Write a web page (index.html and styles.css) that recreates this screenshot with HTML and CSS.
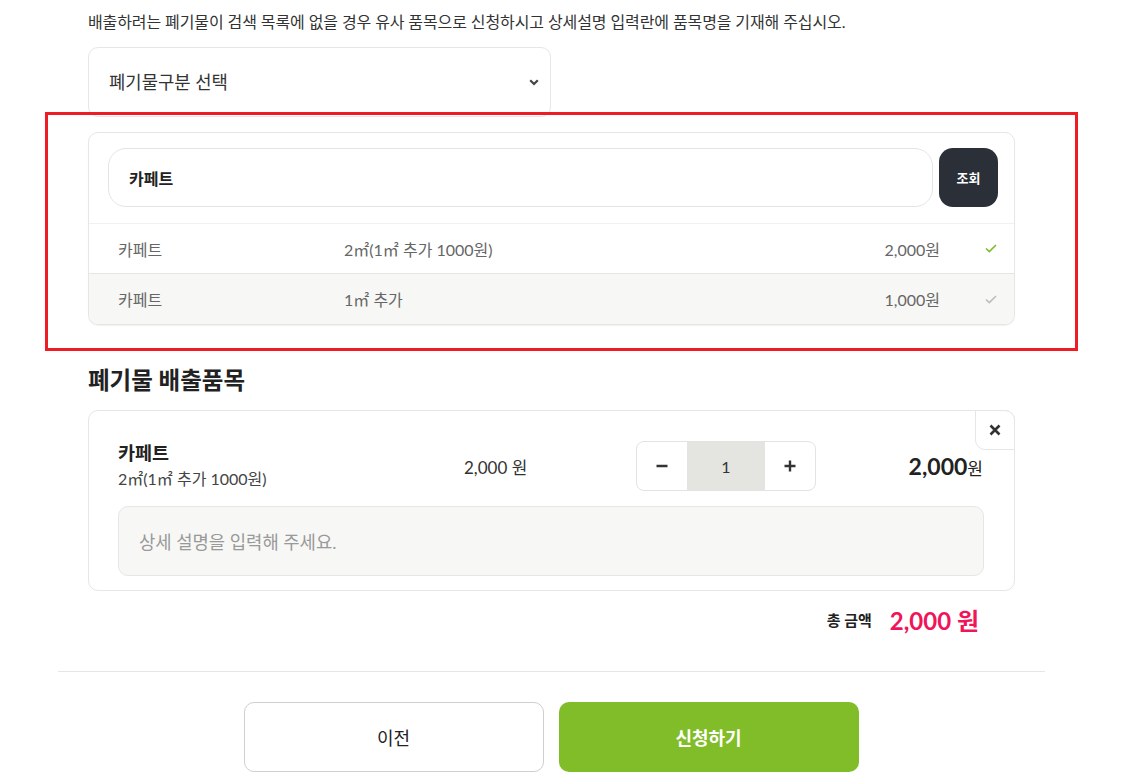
FILE: index.html
```html
<!DOCTYPE html>
<html lang="ko">
<head>
<meta charset="utf-8">
<link rel="stylesheet" href="styles.css">
</head>
<body>
<div class="wrap">
  <div class="inner">
    <p class="notice">배출하려는 폐기물이 검색 목록에 없을 경우 유사 품목으로 신청하시고 상세설명 입력란에 품목명을 기재해 주십시오.</p>
    <div class="select">
      <span>폐기물구분 선택</span>
      <svg class="chev" width="10" height="7" viewBox="0 0 10 7"><path d="M1.2 1.2 L5 5 L8.8 1.2" fill="none" stroke="#444" stroke-width="2.2"/></svg>
    </div>
    <div class="search-card">
      <div class="search-bar">
        <div class="search-input">카페트</div>
        <button class="search-btn">조회</button>
      </div>
      <div class="result-row">
        <span class="r-name">카페트</span>
        <span class="r-spec">2㎡(1㎡ 추가 1000원)</span>
        <span class="r-price">2,000원</span>
        <span class="r-check"><svg width="12" height="9" viewBox="0 0 12 9"><path d="M1 4.5 L4.3 7.6 L11 1" fill="none" stroke="#7dbd2a" stroke-width="1.6"/></svg></span>
      </div>
      <div class="result-row alt">
        <span class="r-name">카페트</span>
        <span class="r-spec">1㎡ 추가</span>
        <span class="r-price">1,000원</span>
        <span class="r-check"><svg width="12" height="9" viewBox="0 0 12 9"><path d="M1 4.5 L4.3 7.6 L11 1" fill="none" stroke="#bdbdbd" stroke-width="1.6"/></svg></span>
      </div>
    </div>
    <h2 class="section-title">폐기물 배출품목</h2>
    <div class="item-card">
      <button class="close-btn"><svg width="12" height="12" viewBox="0 0 12 12"><path d="M1.5 1.5 L10.5 10.5 M10.5 1.5 L1.5 10.5" stroke="#333" stroke-width="2.6"/></svg></button>
      <div class="item-row">
        <div class="item-info">
          <div class="item-name">카페트</div>
          <div class="item-spec">2㎡(1㎡ 추가 1000원)</div>
        </div>
        <div class="item-unit">2,000 원</div>
        <div class="stepper">
          <span class="st-btn"><svg width="12" height="12" viewBox="0 0 12 12"><path d="M0.5 6 H11.5" stroke="#333" stroke-width="2.4"/></svg></span>
          <span class="st-val">1</span>
          <span class="st-btn"><svg width="12" height="12" viewBox="0 0 12 12"><path d="M0.5 6 H11.5 M6 0.5 V11.5" stroke="#333" stroke-width="2.4"/></svg></span>
        </div>
        <div class="item-total"><b>2,000</b>원</div>
      </div>
      <div class="item-desc">상세 설명을 입력해 주세요.</div>
    </div>
    <div class="total">
      <span class="total-label">총 금액</span>
      <span class="total-value">2,000 원</span>
    </div>
  </div>
  <div class="divider"></div>
  <div class="actions">
    <button class="btn btn-prev">이전</button>
    <button class="btn btn-submit">신청하기</button>
  </div>
</div>
<div class="annotation"></div>
</body>
</html>
```

FILE: styles.css
```css
* { box-sizing: border-box; }
body {
  margin: 0;
  background: #fff;
  font-family: "Lato", "Noto Sans CJK KR", sans-serif;
  color: #222;
}
.wrap {
  margin-left: 58px;
  width: 987px;
}
.inner {
  padding: 0 30px;
}
.notice {
  margin: 0;
  padding-top: 12px;
  font-size: 16px;
  line-height: 20px;
  color: #333;
  letter-spacing: -0.1px;
}
.select {
  margin-top: 15px;
  width: 463px;
  height: 70px;
  border: 1px solid #e6e6e6;
  border-radius: 10px;
  display: flex;
  align-items: center;
  justify-content: space-between;
  padding: 0 11px 0 20px;
  font-size: 17.75px;
  color: #333;
}
.select span { margin-top: -2px; }
.search-card {
  margin-top: 15px;
  border: 1px solid #e6e6e6;
  border-radius: 10px;
  overflow: hidden;
  box-shadow: 0 1px 1px rgba(0,0,0,0.06);
}
.search-bar {
  display: flex;
  gap: 6px;
  padding: 15px 16px 16px 19px;
}
.search-input {
  flex: 1;
  height: 59px;
  border: 1px solid #e4e4e4;
  border-radius: 18px;
  display: flex;
  align-items: center;
  padding-left: 20px;
  font-size: 16px;
  font-weight: 700;
  color: #222;
}
.search-btn {
  width: 59px;
  height: 59px;
  border: 0;
  border-radius: 14px;
  background: #2a2f38;
  color: #fff;
  font-family: inherit;
  font-size: 13px;
  font-weight: 700;
  padding: 0;
}
.result-row {
  display: grid;
  grid-template-columns: 226px 1fr auto 74px;
  align-items: center;
  height: 50px;
  padding-left: 29px;
  border-top: 1px solid #f1f1f1;
  font-size: 16px;
  color: #666;
}
.result-row.alt {
  background: #f7f7f5;
  border-top-color: #e6e6e6;
  height: 51px;
}
.r-check {
  padding-left: 45px;
  display: flex;
  align-items: center;
}
.section-title {
  margin: 40px 0 15px;
  font-size: 23.5px;
  line-height: 30px;
  font-weight: 700;
  color: #222;
}
.item-card {
  position: relative;
  border: 1px solid #e6e6e6;
  border-radius: 10px;
  padding: 30px 30px 14px 29px;
}
.close-btn {
  position: absolute;
  top: -1px;
  right: -1px;
  width: 40px;
  height: 40px;
  border: 1px solid #e6e6e6;
  border-radius: 0 10px 0 10px;
  background: #fff;
  display: flex;
  align-items: center;
  justify-content: center;
  padding: 0;
}
.item-row {
  display: grid;
  grid-template-columns: 346px 172px 180px 1fr;
  align-items: center;
  height: 50px;
}
.item-name {
  font-size: 18.5px;
  font-weight: 700;
  line-height: 25px;
  color: #222;
}
.item-spec {
  font-size: 16px;
  line-height: 25px;
  color: #444;
}
.item-unit {
  font-size: 17px;
  color: #333;
}
.stepper {
  display: flex;
  height: 50px;
  border: 1px solid #e3e3e3;
  border-radius: 8px;
  overflow: hidden;
}
.st-btn {
  width: 50px;
  display: flex;
  align-items: center;
  justify-content: center;
}
.st-val {
  flex: 1;
  background: #e4e5e1;
  display: flex;
  align-items: center;
  justify-content: center;
  font-size: 16px;
  color: #333;
}
.item-total {
  text-align: right;
  font-size: 17px;
  color: #222;
  padding-right: 1px;
}
.item-total b {
  font-size: 23px;
  font-weight: 700;
}
.item-desc {
  margin-top: 15px;
  height: 70px;
  background: #f7f7f5;
  border: 1px solid #e6e6e6;
  border-radius: 10px;
  display: flex;
  align-items: center;
  padding-left: 20px;
  font-size: 17.75px;
  color: #999;
}
.total {
  margin-top: 13px;
  display: flex;
  justify-content: flex-end;
  align-items: center;
  gap: 18px;
  padding-right: 36px;
  height: 30px;
}
.total-label {
  font-size: 15px;
  font-weight: 700;
  color: #222;
}
.total-value {
  font-size: 24px;
  font-weight: 700;
  color: #f0145a;
}
.divider {
  margin-top: 37px;
  border-top: 1px solid #e6e6e6;
}
.actions {
  display: flex;
  justify-content: center;
  gap: 15px;
  margin-top: 30px;
  padding-right: 1px;
}
.btn {
  width: 300px;
  height: 70px;
  border-radius: 10px;
  font-family: inherit;
  font-size: 18px;
  padding: 0;
}
.btn-prev {
  background: #fff;
  border: 1px solid #cfcfcf;
  color: #222;
}
.btn-submit {
  background: #80bd28;
  border: 0;
  color: #fff;
  font-weight: 700;
}
.annotation {
  position: absolute;
  left: 45px;
  top: 112px;
  width: 1033px;
  height: 239px;
  border: 3px solid #ee1c25;
  pointer-events: none;
}
```
